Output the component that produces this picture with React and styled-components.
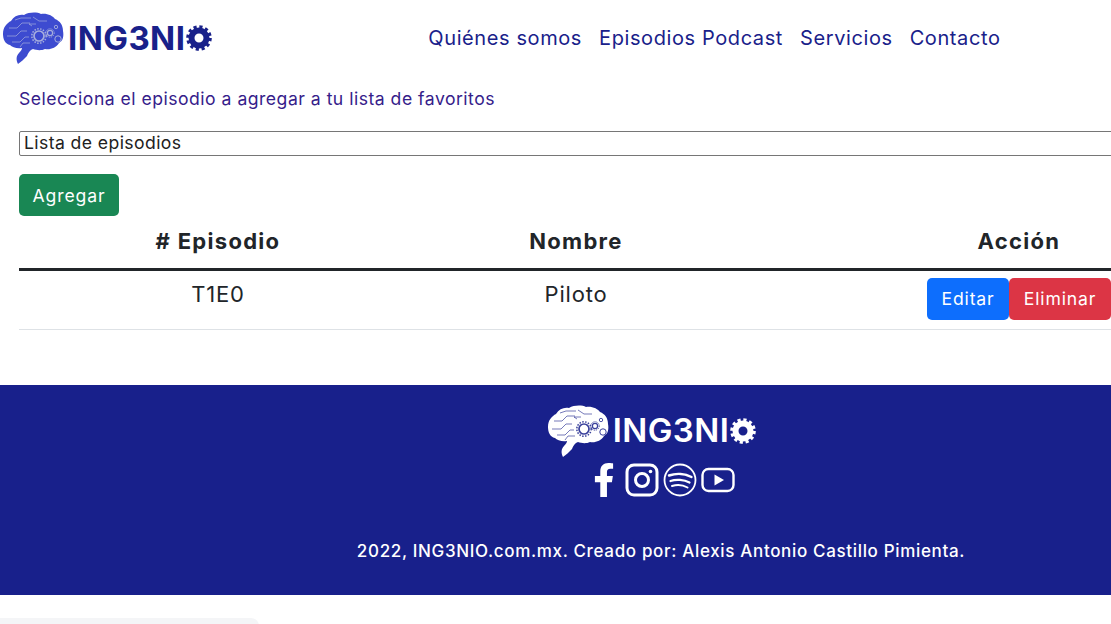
import styled, { createGlobalStyle } from "styled-components";
import { FaFacebookF } from "react-icons/fa";

const GlobalStyle = createGlobalStyle`
  html, body {
    margin: 0;
    padding: 0;
    overflow: hidden;
    background: #fff;
  }
  body {
    font-family: Inter, "Liberation Sans", sans-serif;
    color: #212529;
  }
`;

const Page = styled.div`
  width: 1111px;
  height: 624px;
  overflow: hidden;
`;

const Header = styled.header`
  display: flex;
  align-items: center;
  height: 76px;
  padding-left: 3px;
`;

const LogoWrap = styled.div`
  display: flex;
  align-items: center;
  color: ${(p) => p.$color};
  font-weight: ${(p) => p.$weight};
  font-size: 33px;
  letter-spacing: 0.4px;
  line-height: 1;
`;

const BrainSvg = styled.svg`
  width: 61px;
  height: 52px;
  flex: none;
  margin-right: ${(p) => p.$gap}px;
`;

const GearSvg = styled.svg`
  width: 26px;
  height: 26px;
  flex: none;
  margin-left: 1px;
`;

const Nav = styled.nav`
  display: flex;
  gap: 17px;
  margin-left: 216px;
  font-size: 20px;
  letter-spacing: 0.6px;
  color: #19218a;
`;

const NavLink = styled.a`
  color: inherit;
  text-decoration: none;
`;

const Main = styled.main`
  padding: 13px 0 0 19px;
`;

const Prompt = styled.p`
  margin: 0;
  font-size: 17.6px;
  line-height: 20px;
  letter-spacing: 0.49px;
  color: #35208a;
`;

const EpisodeSelect = styled.div`
  box-sizing: border-box;
  width: 1284px;
  height: 25px;
  margin-top: 22px;
  padding-left: 4px;
  border: 1px solid #767676;
  border-radius: 2px;
  font-size: 17.6px;
  line-height: 22px;
  letter-spacing: 0.41px;
  color: #212121;
`;

const Button = styled.button`
  box-sizing: border-box;
  height: 42px;
  padding: 0;
  width: ${(p) => p.$width}px;
  border: 0;
  border-radius: 5px;
  background: ${(p) => p.$bg};
  color: #fff;
  font-family: inherit;
  font-size: 17.6px;
  letter-spacing: 0.85px;
`;

const AddButton = styled(Button)`
  display: block;
  margin-top: 18px;
`;

const Table = styled.table`
  width: 1284px;
  table-layout: fixed;
  border-collapse: collapse;
  font-size: 22px;
  color: #212529;
`;

const HeadCell = styled.th`
  box-sizing: border-box;
  width: ${(p) => p.$width}px;
  height: 53px;
  padding: 0 0 1px;
  border-bottom: 3px solid #212529;
  font-weight: 700;
  text-align: center;
  letter-spacing: 1.3px;
`;

const Cell = styled.td`
  height: 60px;
  padding: 7px 0 0;
  box-sizing: border-box;
  vertical-align: top;
  text-align: center;
  border-bottom: 1px solid #dee2e6;
  letter-spacing: 0.8px;
  line-height: 33px;
`;

const ActionGroup = styled.div`
  display: flex;
  justify-content: center;
`;

const Footer = styled.footer`
  display: flex;
  flex-direction: column;
  align-items: center;
  box-sizing: border-box;
  height: 210px;
  margin-top: 55px;
  padding: 20px 0 0 193px;
  background: #18208b;
  color: #fff;
`;

const SocialRow = styled.div`
  display: flex;
  align-items: center;
  gap: 4px;
  height: 36px;
  margin-top: 5px;
  margin-left: 18px;
`;

const SocialSvg = styled.svg`
  width: ${(p) => p.$w}px;
  height: 34px;
  flex: none;
`;

const Copy = styled.p`
  margin: 42px 0 0 18px;
  font-size: 17px;
  font-weight: 500;
  letter-spacing: 0.66px;
  line-height: 22px;
  white-space: nowrap;
`;

const BottomStrip = styled.div`
  width: 259px;
  height: 40px;
  margin-top: 23px;
  background: #f4f5f7;
  border-top-right-radius: 8px;
`;

// logo drawing, the same brain in both colour versions
const Brain = ({ fill, line, gap }) => (
  <BrainSvg viewBox="0 0 61 52" $gap={gap}>
    <path
      fill={fill}
      d="M0 22C0 15 4 11 8 9C11 4 16 2 21 3C26 0 34 0 38 2C44 1 50 4 52 7C57 9 60 13 60 19C61 24 60 29 56 31C53 36 47 38 42 37C38 39 33 38 30 37C27 38 25 41 24 44C21 47 18 50 15 52C13 48 13 44 16 41C18 39 19 37 19 36C14 37 9 35 7 33C2 32 0 27 0 22Z"
    />
    <g fill="none" stroke={line} strokeWidth="0.7" opacity="0.85">
      <path d="M6 16H14L19 11H27M4 24H13L18 19H24M9 30H17L22 25H26M12 8L18 6H28M30 5L36 9H44M17 35L20 31H27M29 14L26 12H33" />
      <circle cx="36" cy="24" r="5" strokeWidth="1.7" />
      <circle cx="36" cy="24" r="7.2" strokeWidth="1.5" strokeDasharray="1.5 1.4" />
      <circle cx="47" cy="21" r="2.6" strokeWidth="1.2" />
      <circle cx="47" cy="21" r="4.2" strokeWidth="1" strokeDasharray="1.2 1" />
      <circle cx="53" cy="15" r="1.7" strokeWidth="0.9" />
      <circle cx="55" cy="27" r="3.2" strokeWidth="1" />
    </g>
  </BrainSvg>
);

const Gear = ({ color }) => (
  <GearSvg viewBox="0 0 26 26">
    <circle cx="13" cy="13" r="7.5" fill="none" stroke={color} strokeWidth="6" />
    <circle
      cx="13"
      cy="13"
      r="11"
      fill="none"
      stroke={color}
      strokeWidth="3.6"
      strokeDasharray="3.1 2.66"
    />
  </GearSvg>
);

const Logo = ({ color, weight, brainFill, brainLine, gap }) => (
  <LogoWrap $color={color} $weight={weight}>
    <Brain fill={brainFill} line={brainLine} gap={gap} />
    ING3NI
    <Gear color={color} />
  </LogoWrap>
);

const App = () => {
  return (
    <Page>
      <GlobalStyle />
      <Header>
        <Logo color="#19218a" weight={700} brainFill="#3d4bd0" brainLine="#b9bfe0" gap={4} />
        <Nav>
          <NavLink href="#">Quiénes somos</NavLink>
          <NavLink href="#">Episodios Podcast</NavLink>
          <NavLink href="#">Servicios</NavLink>
          <NavLink href="#">Contacto</NavLink>
        </Nav>
      </Header>

      <Main>
        <Prompt>Selecciona el episodio a agregar a tu lista de favoritos</Prompt>
        <EpisodeSelect>Lista de episodios</EpisodeSelect>
        <AddButton $bg="#198754" $width={100}>Agregar</AddButton>
        <Table>
          <thead>
            <tr>
              <HeadCell $width={398}># Episodio</HeadCell>
              <HeadCell $width={318}>Nombre</HeadCell>
              <HeadCell>Acción</HeadCell>
            </tr>
          </thead>
          <tbody>
            <tr>
              <Cell>T1E0</Cell>
              <Cell>Piloto</Cell>
              <Cell>
                <ActionGroup>
                  <Button $bg="#0d6efd" $width={82}>Editar</Button>
                  <Button $bg="#dc3545" $width={102}>Eliminar</Button>
                </ActionGroup>
              </Cell>
            </tr>
          </tbody>
        </Table>
      </Main>

      <Footer>
        <Logo color="#fff" weight={600} brainFill="#fff" brainLine="#18208b" gap={4} />
        <SocialRow>
          <FaFacebookF size={34} />
          <SocialSvg viewBox="0 0 34 34" $w={34}>
            <rect x="2" y="2" width="30" height="30" rx="7" fill="none" stroke="#fff" strokeWidth="3" />
            <circle cx="17" cy="17" r="6.5" fill="none" stroke="#fff" strokeWidth="3" />
            <circle cx="25.5" cy="8.5" r="1.8" fill="#fff" />
          </SocialSvg>
          <SocialSvg viewBox="0 0 34 34" $w={34}>
            <circle cx="17" cy="17" r="15.5" fill="none" stroke="#fff" strokeWidth="1.8" />
            <g fill="none" stroke="#fff" strokeLinecap="round">
              <path d="M6 12.5C13 10 22 10.5 28.5 14" strokeWidth="2.4" />
              <path d="M7.5 18C13 16 21 16.5 26.5 19.5" strokeWidth="2.2" />
              <path d="M9 23C14 21.5 20 22 24.5 24.5" strokeWidth="2" />
            </g>
          </SocialSvg>
          <SocialSvg viewBox="0 0 34 34" $w={34}>
            <rect x="1.5" y="6" width="31" height="22" rx="6" fill="none" stroke="#fff" strokeWidth="2.4" />
            <path d="M13.5 11.5L23 17L13.5 22.5Z" fill="#fff" />
          </SocialSvg>
        </SocialRow>
        <Copy>2022, ING3NIO.com.mx. Creado por: Alexis Antonio Castillo Pimienta.</Copy>
      </Footer>
      <BottomStrip />
    </Page>
  );
};

export default App;
